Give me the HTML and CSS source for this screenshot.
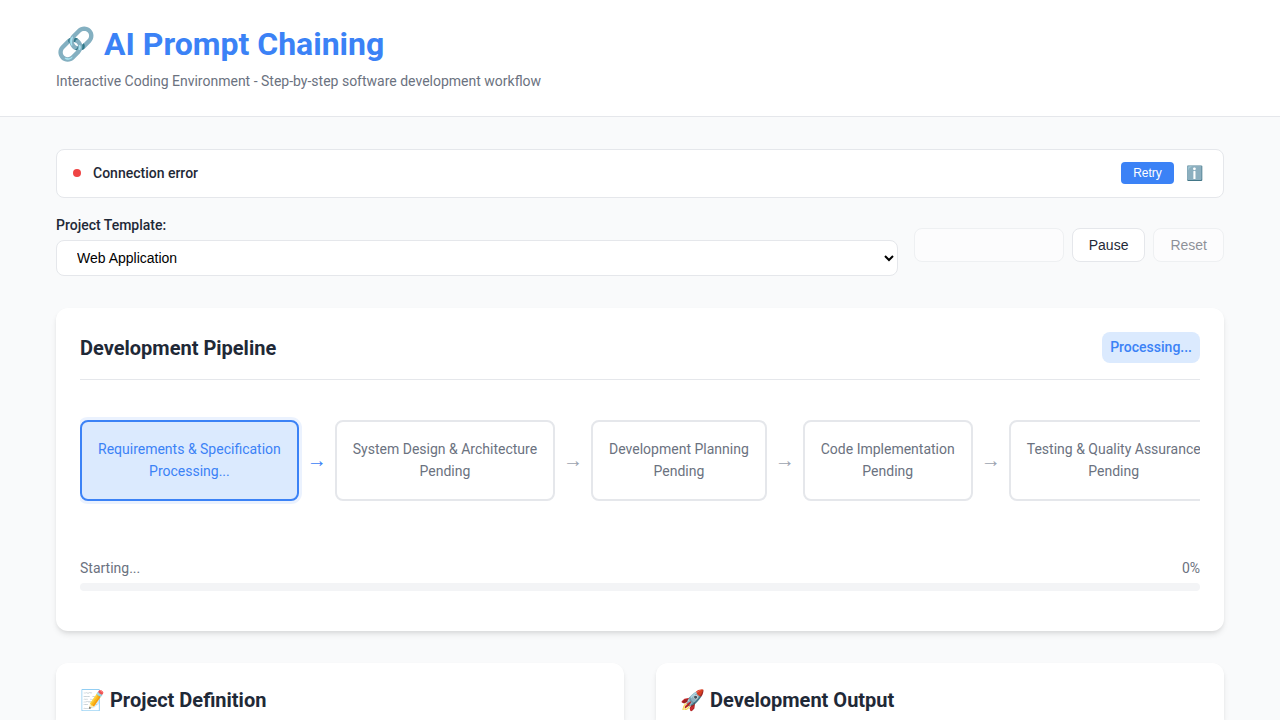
FILE: index.html
```html
<!DOCTYPE html>
<html lang="en">
<head>
<meta charset="utf-8">
<title>AI Prompt Chaining</title>
<link rel="stylesheet" href="styles.css">
</head>
<body>
<header class="header">
  <div class="container">
    <h1>🔗 AI Prompt Chaining</h1>
    <p class="subtitle">Interactive Coding Environment - Step-by-step software development workflow</p>
  </div>
</header>
<main class="container main">
  <div class="status">
    <span class="dot"></span>
    <span class="status-text">Connection error</span>
    <button class="retry">Retry</button>
    <button class="info">ℹ️</button>
  </div>
  <div class="controls">
    <div class="template">
      <label for="tpl">Project Template:</label>
      <select id="tpl"><option>Web Application</option></select>
    </div>
    <div class="actions">
      <button class="btn start" disabled></button>
      <button class="btn">Pause</button>
      <button class="btn" disabled>Reset</button>
    </div>
  </div>
  <section class="card pipeline">
    <div class="card-head">
      <h2>Development Pipeline</h2>
      <span class="badge">Processing...</span>
    </div>
    <div class="flow">
      <div class="step active">Requirements &amp; Specification<br>Processing...</div>
      <div class="arrow on">→</div>
      <div class="step">System Design &amp; Architecture<br>Pending</div>
      <div class="arrow">→</div>
      <div class="step">Development Planning<br>Pending</div>
      <div class="arrow">→</div>
      <div class="step">Code Implementation<br>Pending</div>
      <div class="arrow">→</div>
      <div class="step">Testing &amp; Quality Assurance<br>Pending</div>
    </div>
    <div class="progress">
      <div class="progress-info"><span>Starting...</span><span>0%</span></div>
      <div class="bar"></div>
    </div>
  </section>
  <div class="columns">
    <section class="card"><h2>📝 Project Definition</h2></section>
    <section class="card"><h2>🚀 Development Output</h2></section>
  </div>
</main>
</body>
</html>
```
FILE: styles.css
```css
* { box-sizing: border-box; margin: 0; padding: 0; }
html, body { height: 720px; overflow: hidden; }
body { background: #f9fafb; color: #1f2937; font-family: Roboto, sans-serif; font-size: 14px; line-height: 22.4px; }
.container { max-width: 1200px; margin: 0 auto; padding: 0 16px; }
.header { height: 117px; background: #fff; border-bottom: 1px solid #e5e7eb; padding-top: 24px; }
h1 { font-size: 32px; line-height: 40px; font-weight: 700; color: #3b82f6; }
.subtitle { margin-top: 6px; color: #6b7280; }
.main { padding-top: 32px; }
.status { height: 49px; display: flex; align-items: center; background: #fff; border: 1px solid #e5e7eb; border-radius: 8px; padding: 0 16px 1px; }
.dot { width: 8px; height: 8px; border-radius: 50%; background: #ef4444; margin-right: 12px; }
.status-text { font-weight: 500; flex: 1; }
button, select { font-family: "Liberation Sans", Arial, sans-serif; }
.retry { width: 53px; height: 22px; background: #3b82f6; color: #fff; border: 0; border-radius: 4px; font-size: 12px; margin-right: 8px; }
.info { width: 25px; height: 24px; border: 0; background: none; font-size: 14px; }
.controls { display: flex; gap: 16px; align-items: center; margin-top: 16px; height: 62px; }
.template { flex: 1; display: flex; flex-direction: column; gap: 4px; }
label { font-weight: 500; }
select { width: 100%; height: 36px; border: 1px solid #e5e7eb; border-radius: 8px; background: #fff; font-size: 14px; padding: 0 16px; color: #000; }
.actions { display: flex; gap: 8px; }
.btn { height: 34px; padding: 0 16px; background: #fff; border: 1px solid #e5e7eb; border-radius: 8px; font-size: 14px; color: #1f2937; }
.btn:disabled { opacity: .5; }
.start { width: 150px; }
.card { background: #fff; border-radius: 12px; padding: 24px; box-shadow: 0 4px 6px -1px rgba(0,0,0,.1), 0 2px 4px -1px rgba(0,0,0,.06); }
.pipeline { margin-top: 32px; height: 323px; }
.card-head { height: 48px; display: flex; justify-content: space-between; align-items: flex-start; border-bottom: 1px solid #e5e7eb; }
h2 { font-size: 20px; line-height: 32px; font-weight: 700; }
.badge { background: #dbeafe; color: #3b82f6; border-radius: 8px; padding: 4px 8px; height: 31px; font-weight: 500; }
.flow { display: flex; align-items: center; height: 129px; margin-top: 16px; overflow: hidden; }
.step { flex: none; height: 81px; padding: 16px; border: 2px solid #e5e7eb; border-radius: 8px; color: #6b7280; text-align: center; }
.active { border-color: #3b82f6; background: #dbeafe; color: #3b82f6; box-shadow: 0 0 0 3px rgba(59,130,246,.1); }
.arrow { flex: none; width: 36px; text-align: center; font-size: 20px; color: #9ca3af; }
.on { color: #3b82f6; }
.progress { margin-top: 32px; color: #6b7280; }
.progress-info { display: flex; justify-content: space-between; margin-bottom: 4px; }
.bar { height: 8px; border-radius: 4px; background: #f3f4f6; }
.columns { display: grid; grid-template-columns: 1fr 1fr; gap: 32px; margin-top: 32px; }
.columns .card { height: 57px; padding: 21px 24px 0; border-radius: 12px 12px 0 0; }
```
